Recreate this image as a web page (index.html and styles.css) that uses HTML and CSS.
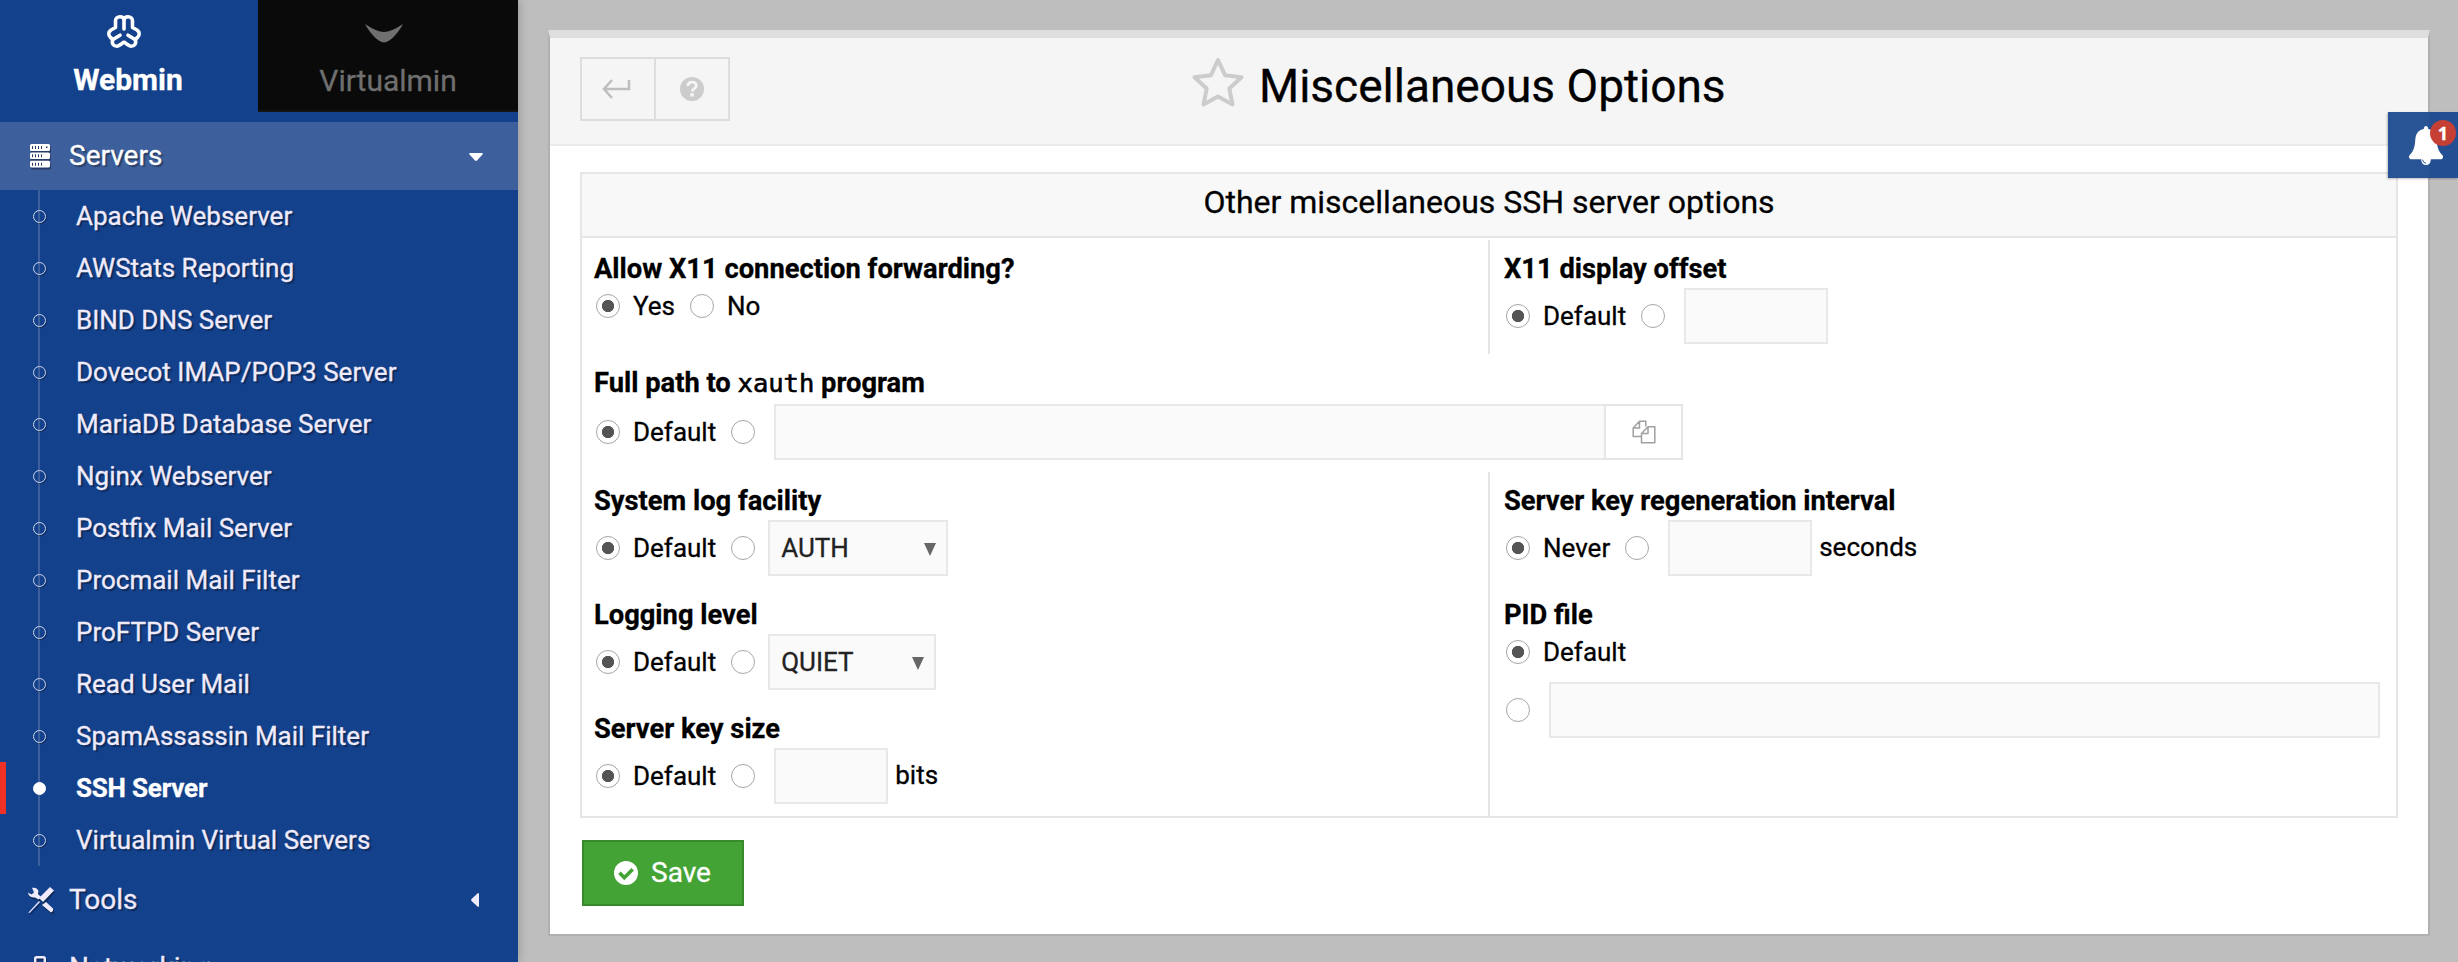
FILE: index.html
```html
<!DOCTYPE html>
<html lang="en">
<head>
<meta charset="utf-8">
<title>Miscellaneous Options</title>
<link rel="stylesheet" href="styles.css">
</head>
<body>
<svg class="defs" aria-hidden="true">
  <symbol id="file-copy" viewBox="0 0 24 24"><path d="M9.5 16.5H1.2V8L7.5 1.2h6.3v5.3M7.5 1.2V8H1.2M16 6.8h6.8v16H9.5V13.5zM16 6.8v6.7H9.5" fill="none" stroke="currentColor" stroke-width="1.5" stroke-linejoin="round"/></symbol>
</svg>
<div class="app">
  <aside class="sidebar">
    <nav class="tabs">
      <a class="tab tab-active">
        <svg class="logo-webmin" viewBox="0 0 34 33" fill="none" stroke="currentColor" stroke-width="3.6" stroke-linecap="round" stroke-linejoin="round"><path d="M17 14V5.500C17 3 15.500 1.800 13 1.800S8.500 3.300 8.500 6V12.500L4 15C1.300 17 1 20 3.500 22.500L6 24.500C4 28 6.500 31.300 10 31.200C12.500 31 14.500 28.500 17 27.200C19.500 28.500 21.500 31 24 31.200C27.500 31.300 30 28 28 24.500L30.500 22.500C33 20 32.700 17 30 15L25.500 12.500V6C25.500 3.300 23.500 1.800 21 1.800S17 3 17 5.500M6 24.500L13 20.200M28 24.500L21 20.200"/></svg>
        <span>Webmin</span>
      </a>
      <a class="tab tab-idle">
        <svg class="logo-virtualmin" viewBox="0 0 38 19"><path d="M0 0Q12 8 19 8T38 0C34 8 25 18.500 19 18.500S4 8 0 0z" fill="currentColor"/></svg>
        <span>Virtualmin</span>
      </a>
    </nav>
    <a class="group group-open">
      <svg class="icon-group" viewBox="0 0 20 24"><path fill="currentColor" fill-rule="evenodd" d="M1.500 0h17q1.500 0 1.500 1.500v4q0 1.500-1.500 1.500h-17Q0 7 0 5.500v-4Q0 0 1.500 0zM2 2v3h1V2zm3 0v3h1V2zm3 0v3h1V2zm3 0v3h1V2zm5 .5V4h1.500V2.500zM1.500 8.500h17q1.500 0 1.500 1.500v3.500q0 1.500-1.500 1.500h-17Q0 15 0 13.500V10q0-1.500 1.500-1.500zM2 10.300v3h1v-3zm3 0v3h1v-3zm3 0v3h1v-3zm3 0v3h1v-3zM1.500 16.700h17q1.500 0 1.500 1.500v3.800q0 1.500-1.500 1.500h-17Q0 23.500 0 22v-3.800q0-1.500 1.500-1.500zM2 18.700v3h1v-3zm3 0v3h1v-3zm3 0v3h1v-3zm3 0v3h1v-3z"/></svg>
      <span>Servers</span>
      <svg class="caret caret-down" viewBox="0 0 14 8"><path fill="currentColor" d="M1 0h12q1.500 0 .5 1.500L8 7.500q-1 .8-2 0L.5 1.500Q-.5 0 1 0z"/></svg>
    </a>
    <ul class="modules">
      <li>Apache Webserver</li>
      <li>AWStats Reporting</li>
      <li>BIND DNS Server</li>
      <li>Dovecot IMAP/POP3 Server</li>
      <li>MariaDB Database Server</li>
      <li>Nginx Webserver</li>
      <li>Postfix Mail Server</li>
      <li>Procmail Mail Filter</li>
      <li>ProFTPD Server</li>
      <li>Read User Mail</li>
      <li>SpamAssassin Mail Filter</li>
      <li class="current">SSH Server</li>
      <li>Virtualmin Virtual Servers</li>
    </ul>
    <a class="group">
      <svg class="icon-group icon-tools" viewBox="0 0 26 26"><path fill="currentColor" d="M22 0l4 3.500-11 11.500-4-4zM11 14l1 1L2 25.500.8 26 .5 25.500zM18 15l7 6.500q.8 2.500-2 4L14 18zM4 .8Q9 0 10.500 4l-.5 3 3 3-2.500 2.500-3.500-2Q1 11 0 5.500l3.500 2L6 5.500z"/></svg>
      <span>Tools</span>
      <svg class="caret caret-left" viewBox="0 0 8 14"><path fill="currentColor" d="M8 1v12q0 1.500-1.500.5L.5 8q-.8-1 0-2L6.500.5Q8-.5 8 1z"/></svg>
    </a>
    <a class="group group-last">
      <svg class="icon-group icon-net" viewBox="0 0 12 24"><path d="M1.200 24V2.500q0-1.300 1.300-1.300h7q1.300 0 1.300 1.300V24" fill="none" stroke="currentColor" stroke-width="2.400"/></svg>
      <span>Networking</span>
    </a>
  </aside>

  <main class="page">
    <section class="panel">
      <header class="panel-head">
        <div class="btns">
          <button><svg class="icon-return" viewBox="0 0 28 20"><path d="M10 1L2 10l8 9M2 10h25V1" fill="none" stroke="currentColor" stroke-width="2.600"/></svg></button>
          <button><svg class="icon-help" viewBox="0 0 24 24"><circle cx="12" cy="12" r="12" fill="currentColor"/><path d="M7.800 9C8 6.300 9.700 5.200 12 5.200c2.500 0 4.200 1.400 4.200 3.500 0 3-4 2.800-4 5.800" fill="none" stroke="#f5f5f5" stroke-width="2.800"/><path d="M10.300 16.200h3.600v3.300h-3.600z" fill="#f5f5f5"/></svg></button>
        </div>
        <h1><svg class="icon-star" viewBox="0 0 52 50"><path d="M26 3l7 15.200 16.500 2L37.300 31.500l3.200 16L26 39.600l-14.500 7.900 3.200-16L2.500 20.200l16.500-2z" fill="none" stroke="currentColor" stroke-width="4" stroke-linejoin="round"/></svg><span>Miscellaneous Options</span></h1>
      </header>

      <div class="form">
        <h2>Other miscellaneous SSH server options</h2>
        <div class="row">
          <div class="cell">
            <b>Allow X11 connection forwarding?</b>
            <div class="line line-bare"><i class="radio on"></i><span>Yes</span><i class="radio"></i><span>No</span></div>
          </div>
          <div class="cell cell-right">
            <b>X11 display offset</b>
            <div class="line"><i class="radio on"></i><span>Default</span><i class="radio"></i><i class="field w144"></i></div>
          </div>
        </div>
        <div class="row row-full">
          <div class="cell">
            <b>Full path to <code>xauth</code> program</b>
            <div class="line"><i class="radio on"></i><span>Default</span><i class="radio"></i><i class="field w832"></i><i class="chooser"><svg viewBox="0 0 24 24"><use href="#file-copy"/></svg></i></div>
          </div>
        </div>
        <div class="row row-tall">
          <div class="stack">
            <div class="cell">
              <b>System log facility</b>
              <div class="line"><i class="radio on"></i><span>Default</span><i class="radio"></i><div class="select w180">AUTH<svg viewBox="0 0 12 13"><path d="M0 0h12L6 13z" fill="currentColor"/></svg></div></div>
            </div>
            <div class="cell">
              <b>Logging level</b>
              <div class="line"><i class="radio on"></i><span>Default</span><i class="radio"></i><div class="select w168">QUIET<svg viewBox="0 0 12 13"><path d="M0 0h12L6 13z" fill="currentColor"/></svg></div></div>
            </div>
            <div class="cell">
              <b>Server key size</b>
              <div class="line"><i class="radio on"></i><span>Default</span><i class="radio"></i><i class="field w114"></i><em>bits</em></div>
            </div>
          </div>
          <div class="stack stack-right">
            <div class="cell">
              <b>Server key regeneration interval</b>
              <div class="line"><i class="radio on"></i><span>Never</span><i class="radio"></i><i class="field w144"></i><em>seconds</em></div>
            </div>
            <div class="cell">
              <b>PID file</b>
              <div class="line line-bare"><i class="radio on"></i><span>Default</span></div>
              <div class="line line-path"><i class="radio"></i><i class="field w831"></i></div>
            </div>
          </div>
        </div>
      </div>

      <button class="save"><svg viewBox="0 0 24 24"><circle cx="12" cy="12" r="12" fill="#fff"/><path d="M5.500 11.800l4.800 4.900 8.400-8.400" fill="none" stroke="#43a335" stroke-width="3.600"/></svg><span>Save</span></button>
    </section>
  </main>

  <div class="bell">
    <svg viewBox="0 0 36 40"><path fill="#fff" d="M18 0q2 0 2.300 3C26 4 28.500 8 29 14c.5 9 2.500 12.500 6 16q1.500 2.500-1 4H23q-.5 6-5 6t-5-6H2q-2.500-1.500-1-4c3.500-3.500 5.500-7 6-16 .5-6 3-10 8.700-11Q16 0 18 0z"/><path d="M14.500 34.500q.3 3.200 3.500 3.800" stroke="#285496" fill="none"/></svg>
    <span class="badge">1</span>
  </div>
</div>
</body>
</html>
```
FILE: styles.css
```css
* { box-sizing: border-box; }
body { margin: 0; width: 2458px; height: 962px; overflow: hidden; background: #bebebe; font: 26px/34px Roboto, sans-serif; color: #000; -webkit-text-stroke: .3px currentColor; }
h1, h2, ul { margin: 0; padding: 0; font-weight: 400; list-style: none; }
button { margin: 0; padding: 0; font: inherit; background: none; border: 0; border-radius: 0; }
svg { display: block; flex: none; overflow: visible; }
i, em { font-style: normal; }
.defs { position: absolute; width: 0; height: 0; }
.app { display: flex; height: 962px; overflow: hidden; position: relative; }

/* sidebar */
.sidebar { flex: none; width: 518px; height: 962px; overflow: hidden; background: #14418b; color: #f0ebfa; box-shadow: 0 0 10px rgba(0,0,0,.25); z-index: 1; }
.tabs { display: flex; height: 122px; }
.tab { display: flex; flex-direction: column; align-items: center; height: 112px; font-size: 30px; line-height: 36px; }
.tab-active { width: 258px; padding-top: 15px; color: #fff; font-weight: 700; }
.tab-active span { margin: 14px 0 0 -2px; }
.tab-idle { width: 260px; padding-top: 24px; background: #0a0a0a; color: #6f6f6f; border-bottom: 2px solid #141414; }
.tab-idle span { margin: 20px 0 0; }
.logo-webmin { width: 34px; height: 33px; margin-right: 10px; }
.logo-virtualmin { width: 38px; height: 19px; margin-right: 8px; }
.group { display: flex; align-items: center; height: 69px; padding: 0 35px 2px 30px; font-size: 28px; text-shadow: 2px 2px 1px rgba(0,0,0,.35); }
.group-open { height: 68px; padding-bottom: 0; background: #3d5f9b; color: #fff; }
.group-last { padding-bottom: 4px; }
.group span { margin-left: 19px; flex: 1; }
.icon-group { width: 20px; height: 24px; filter: drop-shadow(1px 2px 0 rgba(0,0,0,.35)); }
.icon-tools { width: 26px; height: 26px; margin: 0 -4px 0 -2px; }
.icon-net { width: 12px; height: 24px; margin: 0 4px; }
.caret-down { width: 14px; height: 8px; margin-top: 2px; }
.caret-left { width: 8px; height: 14px; margin-right: 4px; }
.modules { background: linear-gradient(#3d5f9b, #3d5f9b) 38px 0 / 2px 100% no-repeat; }
.modules li { display: flex; align-items: center; height: 52px; padding-left: 33px; text-shadow: 2px 2px 1px rgba(0,0,0,.35); }
.modules li::before { content: ""; width: 11px; height: 11px; margin-right: 30px; border: 1.500px solid #cfd6ea; border-radius: 50%; box-shadow: 1px 1px 1px rgba(0,0,0,.3); }
.modules .current { padding-left: 27px; border-left: 6px solid #ee3124; color: #fff; font-weight: 700; letter-spacing: -.2px; text-shadow: none; }
.modules .current::before { background: #fff; border-color: #fff; box-shadow: none; }

/* page panel */
.page { flex: 1; padding: 30px 28px 0 30px; }
.panel { height: 906px; margin: 0; border: 2px solid #b0b0b0; border-top: 8px solid #dedede; background: #fff; }
.panel-head { display: flex; position: relative; height: 108px; padding: 19px 30px 0; background: #f5f5f5; border-bottom: 2px solid #ebebeb; }
.btns { display: flex; height: 64px; border: 2px solid #ddd; color: #bfbfbf; }
.btns button { display: flex; align-items: center; justify-content: center; width: 72px; color: inherit; }
.btns button + button { width: 74px; border-left: 2px solid #ddd; color: #ccc; }
.icon-return { width: 28px; height: 20px; margin-right: 4px; }
.icon-help { width: 24px; height: 24px; }
.panel-head h1 { display: flex; flex: 1; margin-left: 462px; font-size: 46px; line-height: 56px; }
.panel-head h1 span { margin: 1px 0 0 15px; white-space: nowrap; }
.icon-star { width: 52px; height: 50px; color: #ccc; }

.form { width: 1818px; height: 646px; margin: 26px 0 0 30px; border: 2px solid #e6e6e6; }
.form h2 { height: 64px; padding-top: 8px; border-bottom: 2px solid #e6e6e6; background: #f8f8f8; font-size: 32px; line-height: 40px; text-align: center; }
.row { display: flex; height: 114px; margin-top: 2px; }
.row-full { height: 118px; margin: 0; }
.row-tall { height: 344px; margin: 0; }
.row > :first-child { width: 906px; flex: none; }
.row > :last-child:not(:first-child) { flex: 1; border-left: 2px solid #e6e6e6; }
.cell { height: 114px; padding: 12px 0 0 12px; }
.row > .cell-right, .stack-right .cell { padding-left: 14px; }
.cell b { display: block; height: 36px; font-size: 27.300px; line-height: 34px; white-space: nowrap; }
.cell code { font: 400 25.500px/30px "DejaVu Sans Mono", monospace; -webkit-text-stroke-width: .6px; }
.row-full .cell b { height: 38px; }
.line { display: flex; align-items: center; height: 56px; white-space: nowrap; }
.line-bare { height: 36px; }
.line-path { margin-top: 12px; }
.radio { flex: none; width: 24px; height: 24px; margin-left: 1px; border: 1.500px solid #a6a6a6; border-radius: 50%; }
.radio:first-child { margin-left: 2px; }
.on { background: radial-gradient(circle, #555 0 5.800px, transparent 6.500px); }
.line span { margin: 0 14px 0 13px; }
.line em { margin: 0 0 3px 7px; }
.field { flex: none; height: 56px; margin-left: 19px; background: #fafafa; border: 2px solid #e8e8e8; }
.w144 { width: 144px; } .w832 { width: 832px; } .w831 { width: 831px; } .w114 { width: 114px; } .w180 { width: 180px; } .w168 { width: 168px; }
.chooser { display: flex; flex: none; align-items: center; justify-content: center; width: 79px; height: 56px; margin-left: -2px; border: 2px solid #e6e6e6; color: #a0a0a0; }
.chooser svg { width: 24px; height: 24px; }
.select { display: flex; align-items: center; justify-content: space-between; height: 56px; margin-left: 13px; padding: 0 10px 0 11px; background: #fafafa; border: 2px solid #e8e8e8; color: #222; }
.select svg { width: 12px; height: 13px; color: #666; margin-top: 3px; }

.save { display: flex; align-items: center; width: 162px; height: 66px; margin: 22px 0 0 32px; padding-left: 30px; background: #43a335; border: 2px solid #378b2b; color: #fff; font-size: 28px; }
.save svg { width: 24px; height: 24px; }
.save span { margin-left: 13px; }

/* notification handle over the page's right edge */
.bell { position: absolute; right: 0; top: 112px; width: 70px; height: 66px; padding: 14px 0 0 20px; background: linear-gradient(90deg, #285496 0 41px, #234f92 41px); box-shadow: -1px 1px 2px rgba(0,0,0,.25); z-index: 2; }
.bell svg { width: 36px; height: 39px; }
.badge { position: absolute; left: 42px; top: 8px; width: 26px; height: 26px; border-radius: 50%; background: #c63f35; color: #fff; font: 700 18px/26px "Open Sans", sans-serif; text-align: center; }
```
